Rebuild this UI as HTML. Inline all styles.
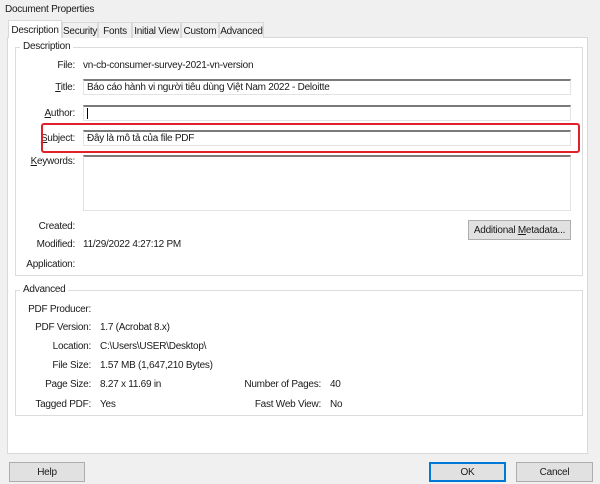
<!DOCTYPE html>
<html><head><meta charset="utf-8"><style>
*{margin:0;padding:0;box-sizing:border-box}
body{width:600px;height:484px;background:#f0f0f0;font-family:"Liberation Sans",Arial,sans-serif;font-size:10px;letter-spacing:-0.25px;color:#1a1a1a;position:relative;overflow:hidden}
div{white-space:nowrap}
.a{position:absolute}
.r{position:absolute;text-align:right}
.tab{position:absolute;top:22px;height:16px;border:1px solid #d9d9d9;border-bottom:none;background:#f0f0f0;padding:3px 0 0;text-align:center}
.panel{position:absolute;left:7px;top:37px;width:581px;height:417px;background:#fff;border:1px solid #d9d9d9}
.grp{position:absolute;border:1px solid #dcdcdc}
.gl{position:absolute;background:#fff;padding:0 3px;top:-7px;left:4px}
.inp{position:absolute;left:83px;width:488px;height:16px;background:#fff;border:1px solid #e3e3e3;border-top:2px solid #7a7a7a;padding:0 3px;line-height:13px}
.btn{position:absolute;height:20px;border:1px solid #adadad;background:#e1e1e1;text-align:center;line-height:19px}
u{text-decoration:underline}
</style></head><body>
<div class="a" style="left:5px;top:4px">Document Properties</div>
<div class="panel"></div>
<div class="tab" style="left:62px;width:36px">Security</div>
<div class="tab" style="left:98px;width:34px">Fonts</div>
<div class="tab" style="left:132px;width:49px">Initial View</div>
<div class="tab" style="left:181px;width:38px">Custom</div>
<div class="tab" style="left:219px;width:45px">Advanced</div>
<div class="tab" style="left:8px;top:20px;width:54px;height:18px;background:#fff;padding-top:4px">Description</div>

<div class="grp" style="left:15px;top:47px;width:568px;height:229px"><div class="gl">Description</div></div>
<div class="r" style="right:525px;top:60px">File:</div>
<div class="a" style="left:83px;top:60px">vn-cb-consumer-survey-2021-vn-version</div>
<div class="r" style="right:525px;top:82px"><u>T</u>itle:</div>
<div class="inp" style="top:79px">Báo cáo hành vi người tiêu dùng Việt Nam 2022 - Deloitte</div>
<div class="r" style="right:525px;top:108px"><u>A</u>uthor:</div>
<div class="inp" style="top:105px"><span style="display:inline-block;width:1px;height:11px;background:#000;vertical-align:middle"></span></div>
<div class="r" style="right:525px;top:133px"><u>S</u>ubject:</div>
<div class="inp" style="top:130px">Đây là mô tả của file PDF</div>
<div style="position:absolute;left:41px;top:123px;width:539px;height:30px;border:2px solid #e0202a;border-radius:3px"></div>
<div class="r" style="right:525px;top:156px"><u>K</u>eywords:</div>
<div class="inp" style="top:155px;height:56px"></div>
<div class="r" style="right:525px;top:221px">Created:</div>
<div class="r" style="right:525px;top:239px">Modified:</div>
<div class="a" style="left:83px;top:239px">11/29/2022 4:27:12 PM</div>
<div class="r" style="right:525px;top:259px">Application:</div>
<div class="btn" style="left:468px;top:220px;width:103px">Additional <u>M</u>etadata...</div>

<div class="grp" style="left:15px;top:290px;width:568px;height:126px"><div class="gl">Advanced</div></div>
<div class="r" style="right:509px;top:304px">PDF Producer:</div>
<div class="r" style="right:509px;top:322px">PDF Version:</div>
<div class="a" style="left:100px;top:322px">1.7 (Acrobat 8.x)</div>
<div class="r" style="right:509px;top:341px">Location:</div>
<div class="a" style="left:100px;top:341px">C:\Users\USER\Desktop\</div>
<div class="r" style="right:509px;top:360px">File Size:</div>
<div class="a" style="left:100px;top:360px">1.57 MB (1,647,210 Bytes)</div>
<div class="r" style="right:509px;top:379px">Page Size:</div>
<div class="a" style="left:100px;top:379px">8.27 x 11.69 in</div>
<div class="r" style="right:509px;top:399px">Tagged PDF:</div>
<div class="a" style="left:100px;top:399px">Yes</div>
<div class="r" style="right:279px;top:379px">Number of Pages:</div>
<div class="a" style="left:330px;top:379px">40</div>
<div class="r" style="right:279px;top:399px">Fast Web View:</div>
<div class="a" style="left:330px;top:399px">No</div>

<div class="btn" style="left:9px;top:462px;width:76px">Help</div>
<div class="btn" style="left:429px;top:462px;width:77px;border:2px solid #0078d7;line-height:17px">OK</div>
<div class="btn" style="left:516px;top:462px;width:77px">Cancel</div>
</body></html>
